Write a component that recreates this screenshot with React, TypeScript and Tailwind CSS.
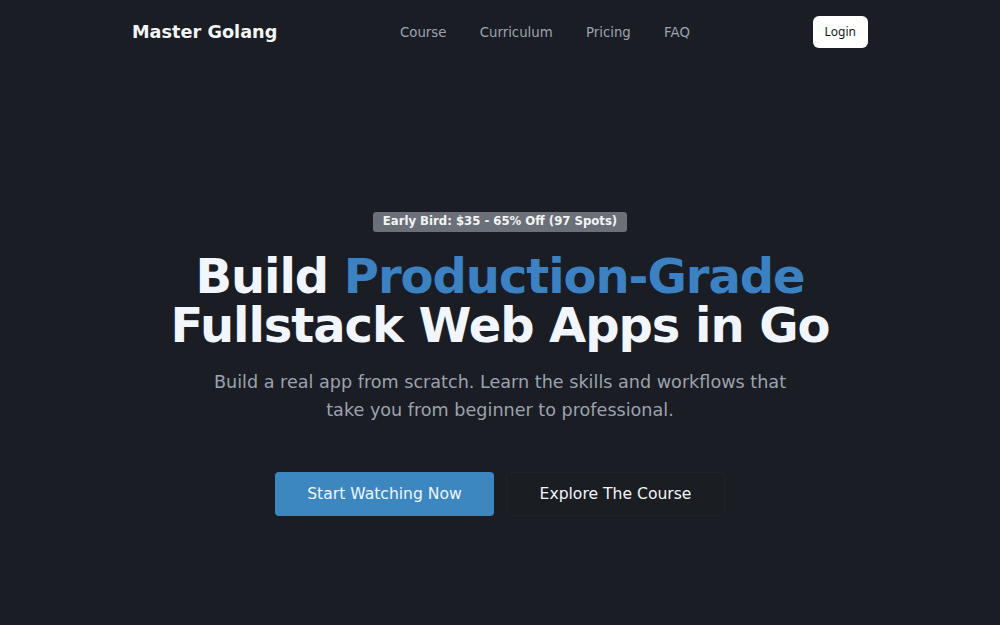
import React from "react";

export default function App() {
  const font = { fontFamily: '"DejaVu Sans", sans-serif' };
  return (
    <div className="min-h-[625px] w-full bg-[#1a1d23]" style={font}>
      <nav className="mx-auto flex h-16 max-w-[768px] items-center justify-between px-4">
        <div className="text-[17.7px] font-bold text-[#f3f4f6]">Master Golang</div>
        <div className="flex items-center gap-[33.3px] pt-[2px] text-[13.3px] text-[#9ca3af]">
          <a>Course</a>
          <a>Curriculum</a>
          <a>Pricing</a>
          <a>FAQ</a>
        </div>
        <button
          className="h-8 rounded-md bg-white px-3 text-[12px] text-[#111827]"
          style={{ fontFamily: '"Noto Sans", sans-serif' }}
        >
          Login
        </button>
      </nav>
      <main className="flex flex-col items-center pt-[148px] text-center">
        <div className="flex h-5 items-center rounded-[3px] bg-[#6b7078] px-[10px] text-[11.7px] font-bold text-[#f3f4f6]">
          Early Bird: $35 - 65% Off (97 Spots)
        </div>
        <h1 className="mt-5 text-[48px] font-bold leading-[49px] tracking-[-0.022em] text-[#f0f6fc]">
          Build <span className="text-[#3b82c4]">Production-Grade</span>
          <br />
          Fullstack Web Apps in Go
        </h1>
        <p className="mt-[18px] max-w-[576px] text-[17.6px] leading-[28px] text-[#9ca3af]">
          Build a real app from scratch. Learn the skills and workflows that take you from beginner to professional.
        </p>
        <div className="mt-[48px] flex gap-3">
          <button className="h-11 w-[219px] rounded-[4px] bg-[#3d87c0] pt-[2px] text-[15.6px] text-[#f0f6fc]">
            Start Watching Now
          </button>
          <button className="h-11 w-[219px] rounded-[4px] border border-[#1f2329] bg-[#1a1d22] pt-[2px] text-[15.6px] text-[#f3f4f6]">
            Explore The Course
          </button>
        </div>
      </main>
    </div>
  );
}
